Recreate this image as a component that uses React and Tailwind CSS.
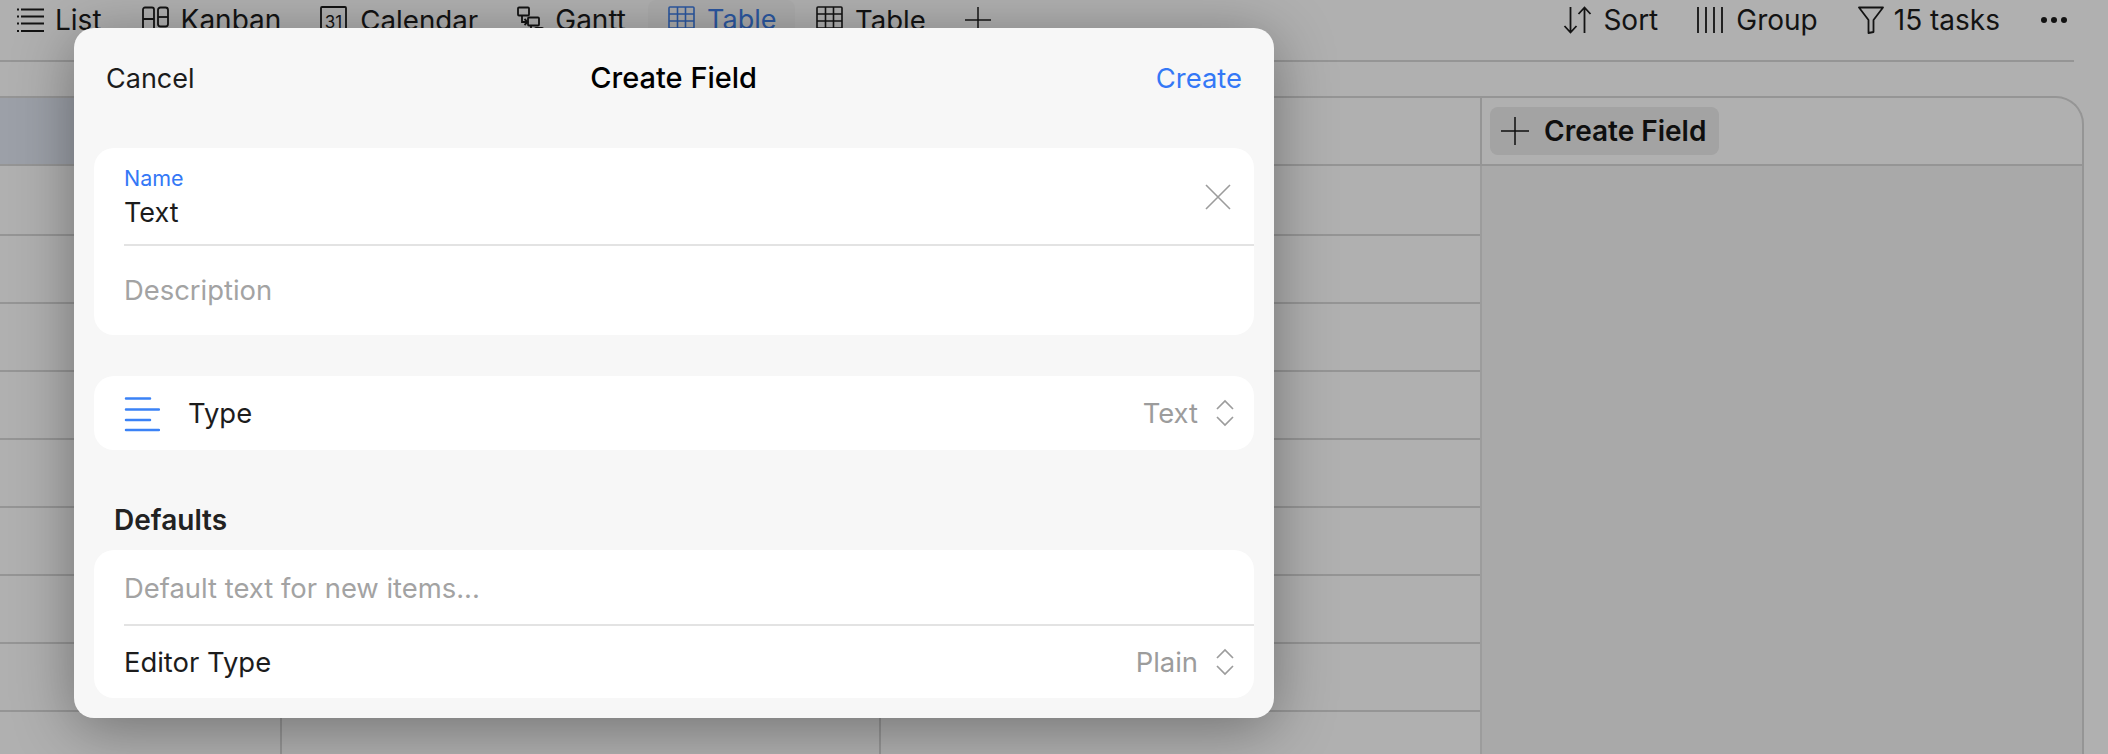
const font = { fontFamily: "Inter, 'Noto Sans', sans-serif" };

function Ico({ w = 28, h = 28, children, className = "", sw = 1.8 }) {
  return (
    <svg width={w} height={h} viewBox={`0 0 ${w} ${h}`} fill="none" stroke="currentColor" strokeWidth={sw} className={`shrink-0 ${className}`}>
      {children}
    </svg>
  );
}

const ListIcon = () => (
  <Ico>
    <path d="M5 3.5H28M5 10.5H28M5 17.5H28M5 25H28" />
    <path d="M1 3.5H3M1 10.5H3M1 17.5H3M1 25H3" strokeWidth="2" />
  </Ico>
);
const KanbanIcon = () => (
  <Ico>
    <path d="M2 28V3.5A2 2 0 0 1 4 1.5H11A2 2 0 0 1 13 3.5V28M2 13H13M2 23H13" />
    <rect x="17" y="1.5" width="10" height="19" rx="2.5" />
    <path d="M17 11H27" />
  </Ico>
);
const CalendarIcon = () => (
  <Ico>
    <rect x="1" y="1" width="25" height="27" rx="1" />
    <text x="13.5" y="22" textAnchor="middle" fontSize="17" fill="currentColor" stroke="none" fontFamily="Inter, sans-serif">31</text>
  </Ico>
);
const GanttIcon = () => (
  <Ico>
    <rect x="1" y="1.5" width="11" height="8" rx="1" />
    <rect x="11" y="11.5" width="11" height="8" rx="1" />
    <rect x="18" y="22" width="8" height="6" rx="1" />
    <path d="M5 10V16H10M7.5 13L10.5 16L7.5 19M14 20V26H18" />
  </Ico>
);
const TableIcon = () => (
  <Ico sw={1.6}>
    <rect x="1" y="1" width="25" height="27" rx="1" />
    <path d="M1 8H26M1 15H26M1 22H26M9.5 1V28M17.5 1V28" />
  </Ico>
);
const PlusIcon = ({ s = 28 }) => (
  <Ico w={s} h={s} sw={1.5}>
    <path d={`M0 ${s / 2}H${s}M${s / 2} 0V${s}`} />
  </Ico>
);
const SortIcon = () => (
  <Ico w={30} h={28}>
    <path d="M7.5 1V26M1.5 20L7.5 26.5L13.5 20" />
    <path d="M21.5 27V2M15.5 8L21.5 1.5L27.5 8" />
  </Ico>
);
const GroupIcon = () => (
  <Ico w={28} h={26}>
    <path d="M2 0V26M10 0V26M18 0V26M26 0V26" />
  </Ico>
);
const FilterIcon = () => (
  <Ico w={28} h={28}>
    <path d="M2 1.5H26L16.5 14V26L11.5 27V14Z" strokeLinejoin="round" />
  </Ico>
);
const DotsIcon = () => (
  <svg width="28" height="8" viewBox="0 0 28 8" fill="currentColor" className="shrink-0">
    <circle cx="4" cy="4" r="3" />
    <circle cx="14" cy="4" r="3" />
    <circle cx="24" cy="4" r="3" />
  </svg>
);
const Chevrons = () => (
  <svg width="18" height="28" viewBox="0 0 18 28" fill="none" stroke="#9c9c9c" strokeWidth="1.7" className="shrink-0">
    <path d="M1 10L9 2L17 10M1 18L9 26L17 18" />
  </svg>
);

function Tab({ icon, label, active, className = "" }) {
  return (
    <div className={`flex h-[40px] items-center ${active ? "text-[#3f7fe8]" : ""} ${className}`}>
      {icon}
      <span>{label}</span>
    </div>
  );
}

function Row({ h }) {
  return (
    <div className={`flex ${h} border-b-2 border-[#d8d8d8]`}>
      <div className="w-[282px] border-r-2 border-[#d8d8d8]" />
      <div className="w-[599px] border-r-2 border-[#d8d8d8]" />
    </div>
  );
}

export default function App() {
  return (
    <div className="relative h-[754px] w-[2108px] overflow-hidden bg-white text-[#1c1c1c]" style={font}>
      {/* Underlying page */}
      <div className="mr-[34px] flex h-[62px] items-start justify-between border-b-2 border-[#d8d8d8] text-[28px] leading-[40px]">
        <div className="flex items-start pl-[16px]">
          <Tab icon={<ListIcon />} label="List" className="mr-[39px] gap-[11px]" />
          <Tab icon={<KanbanIcon />} label="Kanban" className="mr-[39px] gap-[12px]" />
          <Tab icon={<CalendarIcon />} label="Calendar" className="mr-[39px] gap-[12px] text-[27.7px]" />
          <Tab icon={<GanttIcon />} label="Gantt" className="mr-[22px] gap-[10px]" />
          <div className="mr-[21px] flex h-[60px] w-[147px] rounded-lg bg-[#fafafa] pl-[20px]">
            <Tab icon={<TableIcon />} label="Table" active className="gap-[11px] text-[27px]" />
          </div>
          <Tab icon={<TableIcon />} label="Table" className="mr-[39px] gap-[11px] text-[27.5px]" />
          <div className="flex h-[40px] items-center"><PlusIcon s={26} /></div>
        </div>
        <div className="flex items-start pr-[6px]">
          <Tab icon={<SortIcon />} label="Sort" className="mr-[38px] gap-[10px]" />
          <Tab icon={<GroupIcon />} label="Group" className="mr-[39px] gap-[12px]" />
          <Tab icon={<FilterIcon />} label="15 tasks" className="mr-[40px] gap-[9px]" />
          <div className="flex h-[40px] items-center"><DotsIcon /></div>
        </div>
      </div>

      <div className="mt-[34px] mr-[24px] h-[700px] rounded-tr-[28px] border-t-2 border-r-2 border-[#d8d8d8]">
        <div className="flex h-[68px] border-b-2 border-[#d8d8d8]">
          <div className="w-[282px] bg-[#e2e8f4]" />
          <div className="w-[599px] border-r-2 border-[#d8d8d8]" />
          <div className="w-[601px] border-r-2 border-[#d8d8d8]" />
          <div className="flex-1 pl-[8px] pt-[9px]">
            <div className="flex h-[48px] w-[229px] items-center gap-[15px] rounded-lg bg-[#ececec] pl-[11px] text-[28px] font-semibold text-[#161616]">
              <PlusIcon s={28} />
              <span>Create Field</span>
            </div>
          </div>
        </div>
        <div className="flex">
          <div className="w-[1480px]">
            <Row h="h-[70px]" />
            <Row h="h-[68px]" />
            <Row h="h-[68px]" />
            <Row h="h-[68px]" />
            <Row h="h-[68px]" />
            <Row h="h-[68px]" />
            <Row h="h-[68px]" />
            <Row h="h-[68px]" />
            <Row h="h-[68px]" />
          </div>
          <div className="h-[640px] flex-1 border-l-2 border-[#e2e2e2] bg-[#f5f5f5]" />
        </div>
      </div>

      {/* Dim layer */}
      <div className="absolute inset-0 bg-black/[0.31]" />

      {/* Dialog */}
      <div className="absolute left-[74px] top-[28px] flex h-[690px] w-[1200px] flex-col rounded-[20px] bg-[#f7f7f7] px-[20px] text-[27.4px] shadow-[0_10px_60px_rgba(0,0,0,0.36)]">
        <div className="flex h-[100px] items-center justify-between px-[12px]">
          <span className="mt-[2px] text-[27px] text-[#1c1c1c]">Cancel</span>
          <span className="mr-[3px] text-[29px] font-medium text-black">Create Field</span>
          <span className="mt-[2px] text-[#3478f6]">Create</span>
        </div>

        <div className="mt-[20px] rounded-[20px] bg-white">
          <div className="relative h-[98px] pl-[30px]">
            <div className="pt-[15px] text-[21.5px] leading-[30px] text-[#3478f6]">Name</div>
            <div className="mt-[3px] text-[27px] leading-[34px] text-[#1c1c1c]">Text</div>
            <div className="absolute bottom-0 left-[30px] right-0 h-[2px] bg-[#e3e3e3]" />
            <svg width="26" height="26" viewBox="0 0 26 26" fill="none" stroke="#9c9c9c" strokeWidth="1.6" className="absolute right-[23px] top-[36px]">
              <path d="M1 1L25 25M25 1L1 25" />
            </svg>
          </div>
          <div className="flex h-[89px] items-center pl-[30px] text-[#a3a3a3]">Description</div>
        </div>

        <div className="mt-[41px] flex h-[74px] items-center rounded-[20px] bg-white pl-[30px] pr-[20px]">
          <svg width="36" height="36" viewBox="0 0 36 36" fill="none" stroke="#3b82f6" strokeWidth="2.5" strokeLinecap="round" className="mt-[2px] shrink-0">
            <path d="M2 2.5H26M2 13.5H35M2 24H26M2 34H35" />
          </svg>
          <span className="ml-[28px] mt-[2px] text-[#1c1c1c]">Type</span>
          <span className="ml-auto mt-[2px] text-[#9c9c9c]">Text</span>
          <span className="ml-[18px]"><Chevrons /></span>
        </div>

        <div className="mt-[51px] h-[49px] pl-[20px] text-[28px] font-semibold leading-[38px] text-[#222]">Defaults</div>

        <div className="rounded-[20px] bg-white">
          <div className="relative flex h-[76px] items-center pl-[30px] text-[#a3a3a3]">
            <span className="mt-[2px]">Default text for new items...</span>
            <div className="absolute bottom-0 left-[30px] right-0 h-[2px] bg-[#e3e3e3]" />
          </div>
          <div className="flex h-[72px] items-center pl-[30px] pr-[20px]">
            <span className="mt-[2px] text-[#1c1c1c]">Editor Type</span>
            <span className="ml-auto mt-[2px] text-[#9c9c9c]">Plain</span>
            <span className="ml-[18px]"><Chevrons /></span>
          </div>
        </div>
      </div>
    </div>
  );
}
